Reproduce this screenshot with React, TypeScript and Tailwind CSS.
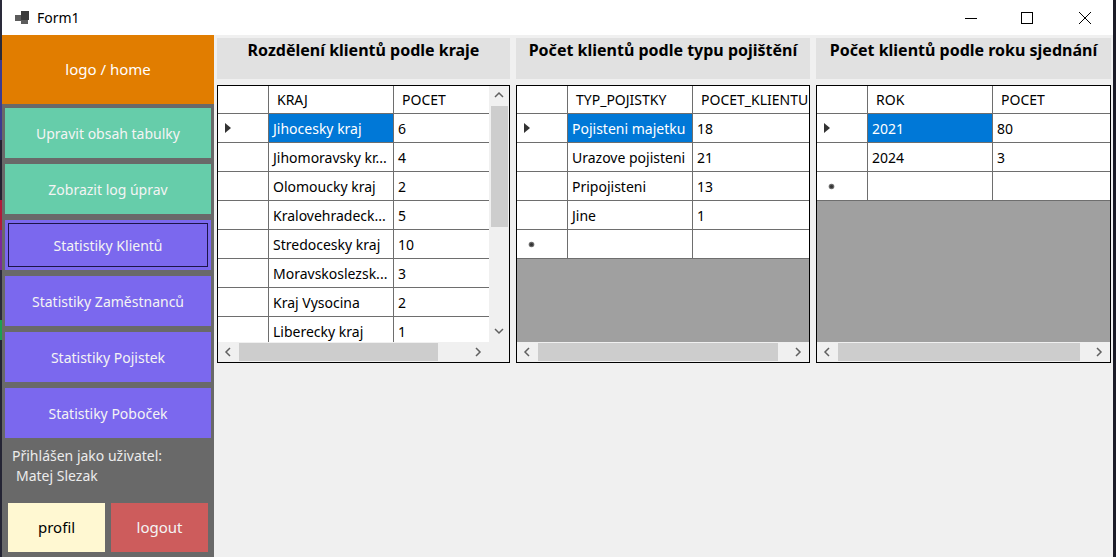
import React from "react";

type GridSpec = {
  title: string;
  cols: [string, string];
  rows: [string, string][];
  newRow: boolean;
  vScroll: boolean;
  width: string;
  hTrack: string;
  thumb: string;
};

const grids: GridSpec[] = [
  {
    title: "Rozdělení klientů podle kraje",
    cols: ["KRAJ", "POCET"],
    rows: [
      ["Jihocesky kraj", "6"],
      ["Jihomoravsky kr...", "4"],
      ["Olomoucky kraj", "2"],
      ["Kralovehradeck...", "5"],
      ["Stredocesky kraj", "10"],
      ["Moravskoslezsk...", "3"],
      ["Kraj Vysocina", "2"],
      ["Liberecky kraj", "1"],
    ],
    newRow: false,
    vScroll: true,
    width: "w-[293px]",
    hTrack: "w-[271px]",
    thumb: "w-[199px]",
  },
  {
    title: "Počet klientů podle typu pojištění",
    cols: ["TYP_POJISTKY", "POCET_KLIENTU"],
    rows: [
      ["Pojisteni majetku", "18"],
      ["Urazove pojisteni", "21"],
      ["Pripojisteni", "13"],
      ["Jine", "1"],
    ],
    newRow: true,
    vScroll: false,
    width: "w-[294px]",
    hTrack: "w-[292px]",
    thumb: "w-[240px]",
  },
  {
    title: "Počet klientů podle roku sjednání",
    cols: ["ROK", "POCET"],
    rows: [
      ["2021", "80"],
      ["2024", "3"],
    ],
    newRow: true,
    vScroll: false,
    width: "w-[295px]",
    hTrack: "w-[293px]",
    thumb: "w-[242px]",
  },
];

const menu = [
  { label: "Upravit obsah tabulky", color: "bg-[#66cdaa]", active: false },
  { label: "Zobrazit log úprav", color: "bg-[#66cdaa]", active: false },
  { label: "Statistiky Klientů", color: "bg-[#7b68ee]", active: true },
  { label: "Statistiky Zaměstnanců", color: "bg-[#7b68ee]", active: false },
  { label: "Statistiky Pojistek", color: "bg-[#7b68ee]", active: false },
  { label: "Statistiky Poboček", color: "bg-[#7b68ee]", active: false },
];

const Chevron = ({ dir }: { dir: "l" | "r" | "u" | "d" }) => {
  const d = {
    l: "M6 1 L2 5 L6 9",
    r: "M2 1 L6 5 L2 9",
    u: "M1 6 L5 2 L9 6",
    d: "M1 2 L5 6 L9 2",
  }[dir];
  return (
    <svg width="10" height="10" viewBox="0 0 10 10" className="shrink-0">
      <path d={d} fill="none" stroke="#606060" strokeWidth="1.5" />
    </svg>
  );
};

const DataGrid = ({ g }: { g: GridSpec }) => (
  <div className={`flex h-[278px] ${g.width} flex-col border border-black bg-[#a0a0a0]`}>
    <div className="flex h-[256px] min-h-0">
      <div className="flex min-w-0 flex-1 flex-col overflow-hidden">
        <div className="flex h-[28px] shrink-0 border-b border-[#6e6e6e] bg-white">
          <div className="w-[51px] shrink-0 border-r border-[#6e6e6e]" />
          <div className="flex w-[125px] shrink-0 items-center border-r border-[#6e6e6e] pl-[8px]">{g.cols[0]}</div>
          <div className="flex flex-1 items-center overflow-hidden whitespace-nowrap pl-[8px]">{g.cols[1]}</div>
        </div>
        {g.rows.map((r, i) => (
          <div key={r[0]} className="flex h-[29px] shrink-0 border-b border-[#6e6e6e] bg-white">
            <div className="flex w-[51px] shrink-0 items-center border-r border-[#6e6e6e] pl-[7px]">
              {i === 0 && (
                <svg width="6" height="10" viewBox="0 0 6 10">
                  <path d="M0 0 L6 5 L0 10 Z" fill="#333" />
                </svg>
              )}
            </div>
            <div
              className={`flex w-[125px] shrink-0 items-center overflow-hidden whitespace-nowrap border-r border-[#6e6e6e] pl-[4px] ${
                i === 0 ? "bg-[#0078d7] text-white" : ""
              }`}
            >
              {r[0]}
            </div>
            <div className="flex flex-1 items-center pl-[4px]">{r[1]}</div>
          </div>
        ))}
        {g.newRow && (
          <div className="flex h-[29px] shrink-0 border-b border-[#6e6e6e] bg-white">
            <div className="flex w-[51px] shrink-0 items-center border-r border-[#6e6e6e] pl-[11px]">
              <svg width="7" height="7" viewBox="0 0 7 7">
                <circle cx="3.5" cy="3.5" r="2.8" fill="#6a6a6a" />
                <circle cx="3.5" cy="3.5" r="1.6" fill="#333" />
              </svg>
            </div>
            <div className="w-[125px] shrink-0 border-r border-[#6e6e6e]" />
            <div className="flex-1" />
          </div>
        )}
      </div>
      {g.vScroll && (
        <div className="flex w-[20px] shrink-0 flex-col items-center bg-[#f0f0f0]">
          <div className="flex h-[20px] items-center justify-center">
            <Chevron dir="u" />
          </div>
          <div className="h-[121px] w-[17px] bg-[#cdcdcd]" />
          <div className="flex-1" />
          <div className="flex h-[20px] items-center justify-center">
            <Chevron dir="d" />
          </div>
        </div>
      )}
    </div>
    <div className="flex h-[20px] shrink-0 bg-[#f0f0f0]">
      <div className={`flex ${g.hTrack} shrink-0 items-center`}>
        <div className="flex w-[21px] justify-center">
          <Chevron dir="l" />
        </div>
        <div className={`h-[18px] ${g.thumb} bg-[#cdcdcd]`} />
        <div className="flex-1" />
        <div className="flex w-[20px] justify-center">
          <Chevron dir="r" />
        </div>
      </div>
    </div>
  </div>
);

export default function App() {
  return (
    <div className="flex h-[557px] w-[1116px] overflow-hidden bg-[#1f1f2b] font-['Segoe_UI','Noto_Sans',sans-serif] text-[14px] text-black">
      <div className="flex w-[2px] shrink-0 flex-col">
        <div className="h-[60px] bg-[#2a2a3a]" />
        <div className="h-[80px] bg-[#3b3b8f]" />
        <div className="h-[60px] bg-[#222230]" />
        <div className="h-[30px] bg-[#b01a3a]" />
        <div className="h-[40px] bg-[#7a2a9a]" />
        <div className="h-[50px] bg-[#2a2a3a]" />
        <div className="h-[20px] bg-[#1aa050]" />
        <div className="flex-1 bg-[#242434]" />
      </div>
      <div className="flex w-[1111px] shrink-0 flex-col">
        <div className="flex h-[35px] shrink-0 items-center bg-white">
          <svg width="16" height="16" viewBox="0 0 16 16" className="ml-[12px]">
            <rect x="1" y="5" width="6" height="6" fill="#5c5c5c" />
            <rect x="7" y="1" width="8" height="9" fill="#3a3a3a" />
            <rect x="7" y="10" width="7" height="4" fill="#5c5c5c" />
          </svg>
          <span className="ml-[7px] text-[14px]">Form1</span>
          <div className="flex-1" />
          <div className="flex h-full w-[46px] items-center justify-center">
            <svg width="12" height="12" viewBox="0 0 12 12">
              <path d="M0 6.5 H12" stroke="#000" strokeWidth="1" />
            </svg>
          </div>
          <div className="ml-[10px] flex h-full w-[46px] items-center justify-center">
            <svg width="12" height="12" viewBox="0 0 12 12">
              <rect x="0.5" y="0.5" width="11" height="11" fill="none" stroke="#000" strokeWidth="1" />
            </svg>
          </div>
          <div className="ml-[12px] mr-[5px] flex h-full w-[46px] items-center justify-center">
            <svg width="12" height="12" viewBox="0 0 12 12">
              <path d="M0 0 L12 12 M12 0 L0 12" stroke="#000" strokeWidth="1" />
            </svg>
          </div>
        </div>
        <div className="flex min-h-0 flex-1">
          <aside className="flex w-[212px] shrink-0 flex-col bg-[#696969]">
            <div className="flex h-[69px] shrink-0 items-center justify-center bg-[#e17d00] text-[15px] text-white">
              logo / home
            </div>
            <div className="mt-[4px] flex flex-col gap-[6px] px-[3px]">
              {menu.map((m) => (
                <div key={m.label} className={`flex h-[50px] items-center justify-center ${m.color} p-[3px] text-[14px] text-[#f4f4f4]`}>
                  <div
                    className={`flex h-full w-full items-center justify-center ${
                      m.active ? "border border-[#1c1448]" : ""
                    }`}
                  >
                    {m.label}
                  </div>
                </div>
              ))}
            </div>
            <div className="mt-[8px] pl-[10px] text-[14px] leading-[20px] text-[#ececec]">Přihlášen jako uživatel:</div>
            <div className="pl-[14px] text-[14px] leading-[20px] text-[#ececec]">Matej Slezak</div>
            <div className="mt-[17px] flex gap-[6px] px-[6px]">
              <div className="flex h-[49px] w-[97px] items-center justify-center bg-[#fff8d2] text-[15px] text-black">profil</div>
              <div className="flex h-[49px] w-[97px] items-center justify-center bg-[#cd5c5c] text-[15px] text-[#f4f4f4]">logout</div>
            </div>
          </aside>
          <main className="flex flex-1 gap-[6px] bg-[#f0f0f0] pl-[3px] pt-[3px]">
            {grids.map((g) => (
              <section key={g.title} className="flex flex-col gap-[6px]">
                <div className={`h-[41px] ${g.width} bg-[#e1e1e1] pt-[1px] text-center text-[16px] font-bold leading-[22px]`}>
                  {g.title}
                </div>
                <DataGrid g={g} />
              </section>
            ))}
          </main>
        </div>
      </div>
      <div className="w-[3px] shrink-0 bg-[#1c1c28]" />
    </div>
  );
}
